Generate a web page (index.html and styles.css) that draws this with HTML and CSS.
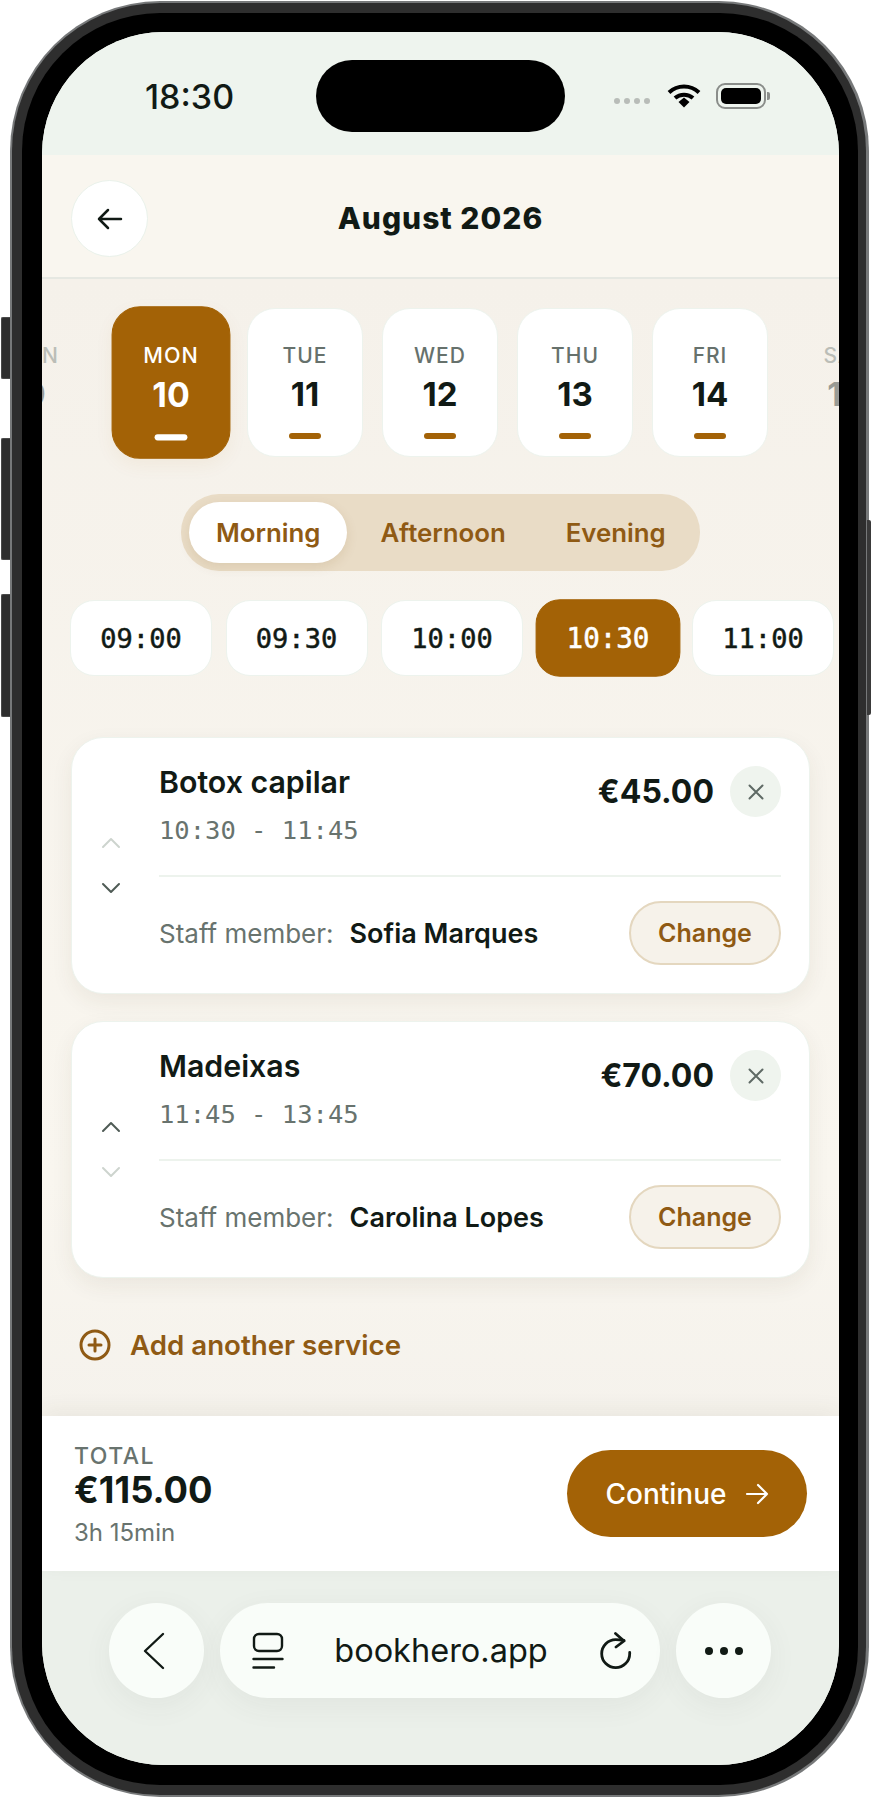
FILE: index.html
```html
<!DOCTYPE html>
<html lang="en">
<head>
  <meta charset="UTF-8">
  <meta name="viewport" content="width=device-width, initial-scale=1.0">
  <title>BookHero - August 2026</title>
  <link rel="stylesheet" href="styles.css">
</head>
<body>

  <div class="phone">
    <span class="side-btn side-btn-mute"></span>
    <span class="side-btn side-btn-up"></span>
    <span class="side-btn side-btn-down"></span>
    <span class="side-btn-right"></span>

    <div class="bezel">
      <div class="glass">
        <div class="screen">

          <div class="status-bar">
            <span class="clock">18:30</span>
            <span class="island"></span>
            <div class="status-icons">
              <div class="signal"><i></i><i></i><i></i><i></i></div>
              <svg class="wifi" width="34" height="25" viewBox="0 0 34 25">
                <path d="M2 9.500C10.500 1.500 23.500 1.500 32 9.500" fill="none" stroke="#000" stroke-width="4"/>
                <path d="M8 15C13 10.500 21 10.500 26 15" fill="none" stroke="#000" stroke-width="4"/>
                <path d="M11.500 19L17 14.500L22.500 19L17 24.500Z" fill="#000"/>
              </svg>
              <div class="battery"><span></span></div>
              <span class="battery-nub"></span>
            </div>
          </div>

          <header class="top-bar">
            <button class="back-btn">
              <svg width="26" height="22" viewBox="0 0 26 22" fill="none" stroke="#111a15" stroke-width="2.500" stroke-linecap="round" stroke-linejoin="round">
                <path d="M24 11H2M11 2L2 11L11 20"/>
              </svg>
            </button>
            <h1 class="month">August 2026</h1>
          </header>

          <main class="content">
            <div class="days">
              <div class="day day-faded"><span class="day-name">SUN</span><span class="day-num">9</span></div>
              <div class="day day-active"><span class="day-name">MON</span><span class="day-num">10</span><span class="day-bar"></span></div>
              <div class="day"><span class="day-name">TUE</span><span class="day-num">11</span><span class="day-bar"></span></div>
              <div class="day"><span class="day-name">WED</span><span class="day-num">12</span><span class="day-bar"></span></div>
              <div class="day"><span class="day-name">THU</span><span class="day-num">13</span><span class="day-bar"></span></div>
              <div class="day"><span class="day-name">FRI</span><span class="day-num">14</span><span class="day-bar"></span></div>
              <div class="day day-faded"><span class="day-name">SAT</span><span class="day-num">15</span></div>
            </div>

            <div class="segment">
              <span class="segment-item segment-active">Morning</span>
              <span class="segment-item">Afternoon</span>
              <span class="segment-item">Evening</span>
            </div>

            <div class="slots">
              <span class="slot">09:00</span>
              <span class="slot">09:30</span>
              <span class="slot">10:00</span>
              <span class="slot slot-active">10:30</span>
              <span class="slot">11:00</span>
            </div>

            <!-- Selected services -->
            <section class="service">
              <div class="reorder">
                <svg class="chev chev-off" width="20" height="12" viewBox="0 0 20 12"><path d="M2 10L10 2L18 10"/></svg>
                <svg class="chev" width="20" height="12" viewBox="0 0 20 12"><path d="M2 2L10 10L18 2"/></svg>
              </div>
              <div class="service-body">
                <div class="service-top">
                  <div>
                    <div class="service-name">Botox capilar</div>
                    <div class="service-time">10:30 - 11:45</div>
                  </div>
                  <div class="service-price">
                    <span class="price">€45.00</span>
                    <button class="remove-btn">
                      <svg width="16" height="16" viewBox="0 0 16 16" fill="none" stroke="#5f6a65" stroke-width="2" stroke-linecap="round"><path d="M1.500 1.500L14.500 14.500M14.500 1.500L1.500 14.500"/></svg>
                    </button>
                  </div>
                </div>
                <div class="service-staff">
                  <span class="staff-label">Staff member:</span>
                  <span class="staff-name">Sofia Marques</span>
                  <button class="change-btn">Change</button>
                </div>
              </div>
            </section>

            <section class="service">
              <div class="reorder">
                <svg class="chev" width="20" height="12" viewBox="0 0 20 12"><path d="M2 10L10 2L18 10"/></svg>
                <svg class="chev chev-off" width="20" height="12" viewBox="0 0 20 12"><path d="M2 2L10 10L18 2"/></svg>
              </div>
              <div class="service-body">
                <div class="service-top">
                  <div>
                    <div class="service-name">Madeixas</div>
                    <div class="service-time">11:45 - 13:45</div>
                  </div>
                  <div class="service-price">
                    <span class="price">€70.00</span>
                    <button class="remove-btn">
                      <svg width="16" height="16" viewBox="0 0 16 16" fill="none" stroke="#5f6a65" stroke-width="2" stroke-linecap="round"><path d="M1.500 1.500L14.500 14.500M14.500 1.500L1.500 14.500"/></svg>
                    </button>
                  </div>
                </div>
                <div class="service-staff">
                  <span class="staff-label">Staff member:</span>
                  <span class="staff-name">Carolina Lopes</span>
                  <button class="change-btn">Change</button>
                </div>
              </div>
            </section>

            <div class="add-service">
              <svg width="32" height="32" viewBox="0 0 32 32" fill="none" stroke="#8f5a14" stroke-width="3" stroke-linecap="round">
                <circle cx="16" cy="16" r="14"/>
                <path d="M16 10V22M10 16H22"/>
              </svg>
              <span>Add another service</span>
            </div>
          </main>

          <div class="summary">
            <div class="total">
              <div class="total-label">TOTAL</div>
              <div class="total-price">€115.00</div>
              <div class="total-time">3h 15min</div>
            </div>
            <button class="continue-btn">
              Continue
              <svg width="24" height="22" viewBox="0 0 24 22" fill="none" stroke="#fff" stroke-width="2.200" stroke-linecap="round" stroke-linejoin="round">
                <path d="M2 11H22M13 2L22 11L13 20"/>
              </svg>
            </button>
          </div>

          <!-- Browser chrome -->
          <div class="browser-bar">
            <button class="round-btn round-btn-back">
              <svg width="24" height="38" viewBox="0 0 24 38" fill="none" stroke="#111a15" stroke-width="2.400" stroke-linecap="round" stroke-linejoin="round"><path d="M21 2L3 19L21 36"/></svg>
            </button>
            <div class="url-pill">
              <svg width="32" height="38" viewBox="0 0 32 38" fill="none" stroke="#111a15" stroke-width="2.400" stroke-linecap="round">
                <rect x="2" y="2" width="28" height="17" rx="5"/>
                <path d="M1.500 27H30.500M1.500 35.500H22"/>
              </svg>
              <span class="url-text">bookhero.app</span>
              <svg width="32" height="38" viewBox="0 0 32 38" fill="none" stroke="#111a15" stroke-width="2.800" stroke-linecap="round" stroke-linejoin="round">
                <path d="M24 8.500C21 8 18.500 7.700 15.700 7.700C8 7.700 1.700 14 1.700 21.700C1.700 29.400 8 35.700 15.700 35.700C23.400 35.700 29.700 29.400 29.700 21.700V20.500"/>
                <path d="M15.500 1.500L24 9L16 15"/>
              </svg>
            </div>
            <button class="round-btn">
              <svg width="40" height="10" viewBox="0 0 40 10" fill="#111a15"><circle cx="5" cy="5" r="4"/><circle cx="20" cy="5" r="4"/><circle cx="35" cy="5" r="4"/></svg>
            </button>
          </div>

        </div>
      </div>
    </div>
  </div>

</body>
</html>
```

FILE: styles.css
```css
* {
  box-sizing: border-box;
}

html, body {
  margin: 0;
  height: 1799px;
  overflow: hidden;
  background-color: #fff;
}

body {
  font-family: Inter, "Liberation Sans", sans-serif;
  color: #111a15;
}

button {
  font-family: inherit;
  border: none;
  padding: 0;
  cursor: pointer;
}

/* Device frame */
.phone {
  position: relative;
  width: 859px;
  height: 1796px;
  margin: 1px 0 0 10px;
  padding: 2px 3px 2px 2px;
  background-color: #77797a;
  border-radius: 150px;
}

.bezel {
  height: 100%;
  padding: 10px 8px 10px 10px;
  background-color: #2e2e2e;
  border-radius: 148px;
}

.glass {
  height: 100%;
  padding: 19px 19px 20px 20px;
  background-color: #000;
  border-radius: 138px;
}

.screen {
  height: 100%;
  display: flex;
  flex-direction: column;
  overflow: hidden;
  border-radius: 122px;
  background-color: #eef4ee;
}

.side-btn {
  position: absolute;
  left: -9px;
  width: 9px;
  background-color: #2e2e2e;
  border: 1px solid #4a4a4a;
  border-right: none;
  border-radius: 2px 0 0 2px;
}

.side-btn-mute {
  top: 316px;
  height: 62px;
}

.side-btn-up {
  top: 437px;
  height: 122px;
}

.side-btn-down {
  top: 593px;
  height: 123px;
}

.side-btn-right {
  position: absolute;
  right: -2px;
  top: 519px;
  width: 4px;
  height: 195px;
  background-color: #3a3a3a;
  border-radius: 0 2px 2px 0;
}

/* Status bar */
.status-bar {
  position: relative;
  flex: none;
  height: 123px;
  display: flex;
  align-items: center;
  justify-content: space-between;
  padding: 0 69px 0 103px;
  background-color: #eef4ee;
}

.clock {
  font-size: 34px;
  font-weight: 500;
  position: relative;
  top: 3px;
}

.island {
  position: absolute;
  left: 274px;
  top: 28px;
  width: 249px;
  height: 72px;
  background-color: #000;
  border-radius: 36px;
}

.status-icons {
  display: flex;
  align-items: center;
  position: relative;
  top: 2px;
}

.signal {
  display: flex;
  gap: 4px;
  margin: 10px 17px 0 0;
}

.signal i {
  width: 6px;
  height: 6px;
  border-radius: 50%;
  background-color: #b8bcb8;
}

.battery {
  width: 50px;
  height: 26px;
  margin-left: 15px;
  padding: 3px;
  border: 2px solid #8a8d8a;
  border-radius: 9px;
}

.battery span {
  display: block;
  height: 100%;
  background-color: #000;
  border-radius: 5px;
}

.battery-nub {
  width: 3px;
  height: 8px;
  margin-left: 1px;
  background-color: #8a8d8a;
  border-radius: 0 2px 2px 0;
}

/* Header */
.top-bar {
  position: relative;
  flex: none;
  height: 124px;
  display: flex;
  align-items: center;
  justify-content: center;
  background-color: #f9f6ef;
  border-bottom: 2px solid #e6e8e2;
}

.back-btn {
  position: absolute;
  left: 29px;
  top: 25px;
  width: 77px;
  height: 77px;
  display: flex;
  align-items: center;
  justify-content: center;
  background-color: #fff;
  border: 1px solid #e9f1ea;
  border-radius: 50%;
}

.month {
  margin: 3px 0 0;
  font-size: 30px;
  font-weight: 800;
  letter-spacing: 1px;
}

/* Main scroll area */
.content {
  flex: none;
  height: 1137px;
  overflow: hidden;
  background: linear-gradient(#f5f1ea, #f9f6ef 900px, #f5f2ec);
}

.days {
  display: flex;
  gap: 19px;
  margin: 29px 0 0 -65px;
}

.day {
  flex: none;
  width: 116px;
  height: 149px;
  padding-top: 35px;
  display: flex;
  flex-direction: column;
  align-items: center;
  background-color: #fff;
  border: 1px solid #edf3ed;
  border-radius: 28px;
}

.day-name {
  font-size: 21px;
  line-height: 24px;
  font-weight: 500;
  letter-spacing: 1px;
  color: #66716c;
}

.day-num {
  margin-top: 7px;
  font-size: 33px;
  line-height: 38px;
  font-weight: 700;
}

.day-bar {
  width: 32px;
  height: 6px;
  margin-top: 20px;
  background-color: #a36206;
  border-radius: 3px;
}

.day-active {
  background-color: #a36206;
  border-color: #a36206;
  transform: translateX(1px) scale(1.025);
  box-shadow: 0 6px 18px rgba(163, 98, 6, 0.06);
}

.day-active .day-name,
.day-active .day-num {
  color: #fff;
}

.day-active .day-bar {
  background-color: #fff;
}

.day-faded {
  background: none;
  border-color: transparent;
  opacity: 0.4;
}

.segment {
  width: 519px;
  height: 77px;
  margin: 37px auto 0;
  padding: 8px;
  display: flex;
  align-items: center;
  background-color: #e9dcc6;
  border-radius: 38px;
}

.segment-item {
  height: 61px;
  padding: 0 30px;
  display: flex;
  align-items: center;
  font-size: 25.800px;
  font-weight: 600;
  color: #8f5a14;
}

.segment-active {
  margin-right: 3px;
  padding: 0 27px;
  background-color: #fff;
  border-radius: 31px;
  box-shadow: 0 4px 12px rgba(120, 80, 20, 0.12);
}

.slots {
  display: flex;
  gap: 13.500px;
  margin: 29px 0 0 28px;
}

.slot {
  flex: none;
  width: 142px;
  height: 76px;
  display: flex;
  align-items: center;
  justify-content: center;
  font-family: "DejaVu Sans Mono", monospace;
  font-size: 27px;
  -webkit-text-stroke: 0.5px currentColor;
  background-color: #fff;
  border: 1px solid #edf3ed;
  border-radius: 24px;
}

.slot-active {
  background-color: #a36206;
  border-color: #a36206;
  color: #fff;
  transform: scale(1.02);
}

.service {
  display: flex;
  height: 257px;
  margin: 27px 29px 0;
  padding: 28px 28px 28px 0;
  background-color: #fff;
  border: 1px solid #edf3ed;
  border-radius: 32px;
  box-shadow: 0 8px 22px rgba(70, 60, 30, 0.07);
}

.slots + .service {
  margin-top: 61px;
}

.reorder {
  flex: none;
  width: 87px;
  padding-right: 9px;
  display: flex;
  flex-direction: column;
  align-items: center;
  justify-content: center;
  gap: 33px;
}

.chev {
  fill: none;
  stroke: #4f5b55;
  stroke-width: 2;
  stroke-linecap: round;
  stroke-linejoin: round;
}

.chev-off {
  stroke: #cdd4ce;
}

.service-body {
  flex: 1;
  min-width: 0;
}

.service-top {
  height: 111px;
  display: flex;
  justify-content: space-between;
  border-bottom: 2px solid #edf3ed;
}

.service-name {
  margin-top: -2px;
  font-size: 30.300px;
  line-height: 36px;
  font-weight: 600;
}

.service-time {
  margin-top: 13px;
  font-family: "DejaVu Sans Mono", monospace;
  font-size: 25.500px;
  line-height: 34px;
  color: #68736e;
}

.service-price {
  display: flex;
  align-items: flex-start;
  gap: 16px;
}

.price {
  margin-top: 7px;
  font-size: 32px;
  line-height: 38px;
  font-weight: 700;
}

.remove-btn {
  width: 51px;
  height: 51px;
  display: flex;
  align-items: center;
  justify-content: center;
  background-color: #eff4ee;
  border-radius: 50%;
}

.service-staff {
  margin-top: 24px;
  display: flex;
  align-items: center;
}

.staff-label {
  font-size: 26px;
  color: #68736e;
}

.staff-name {
  margin-left: 16px;
  font-size: 27px;
  font-weight: 600;
}

.change-btn {
  width: 152px;
  height: 64px;
  margin-left: auto;
  font-size: 25px;
  font-weight: 600;
  color: #8f5a14;
  background-color: #f6f2ea;
  border: 2px solid #e4d7bf;
  border-radius: 32px;
}

.add-service {
  display: flex;
  align-items: center;
  gap: 19px;
  margin: 50px 0 0 37px;
  font-size: 27.700px;
  font-weight: 600;
  color: #8f5a14;
}

/* Total and continue */
.summary {
  flex: none;
  height: 155px;
  display: flex;
  align-items: center;
  justify-content: space-between;
  padding: 0 32px;
  background-color: #fff;
  box-shadow: 0 -6px 20px rgba(60, 60, 30, 0.06);
  position: relative;
}

.total {
  margin-top: 2px;
}

.total-label {
  font-size: 23px;
  line-height: 26px;
  font-weight: 500;
  letter-spacing: 1.500px;
  color: #68736e;
}

.total-price {
  margin-top: 1px;
  font-size: 36.300px;
  line-height: 40px;
  font-weight: 700;
}

.total-time {
  margin-top: 9px;
  font-size: 24px;
  line-height: 28px;
  color: #68736e;
}

.continue-btn {
  width: 240px;
  height: 87px;
  display: flex;
  align-items: center;
  justify-content: center;
  gap: 18px;
  font-size: 28px;
  font-weight: 500;
  color: #fff;
  background-color: #a36206;
  border-radius: 44px;
}

/* Browser bar */
.browser-bar {
  flex: none;
  height: 194px;
  display: flex;
  gap: 16px;
  padding: 32px 0 0 67px;
  background-color: #ebf0ea;
}

.round-btn {
  flex: none;
  width: 95px;
  height: 95px;
  display: flex;
  align-items: center;
  justify-content: center;
  background-color: #f9fdf9;
  border-radius: 50%;
  box-shadow: 0 8px 30px rgba(60, 70, 60, 0.06);
}

.round-btn-back {
  padding-right: 6px;
}

.url-pill {
  flex: none;
  width: 440px;
  height: 95px;
  display: flex;
  align-items: center;
  justify-content: space-between;
  padding: 0 28px 0 32px;
  background-color: #f9fdf9;
  border-radius: 48px;
  box-shadow: 0 8px 30px rgba(60, 70, 60, 0.06);
}

.url-text {
  margin-left: -2px;
  font-size: 32.500px;
}
```
